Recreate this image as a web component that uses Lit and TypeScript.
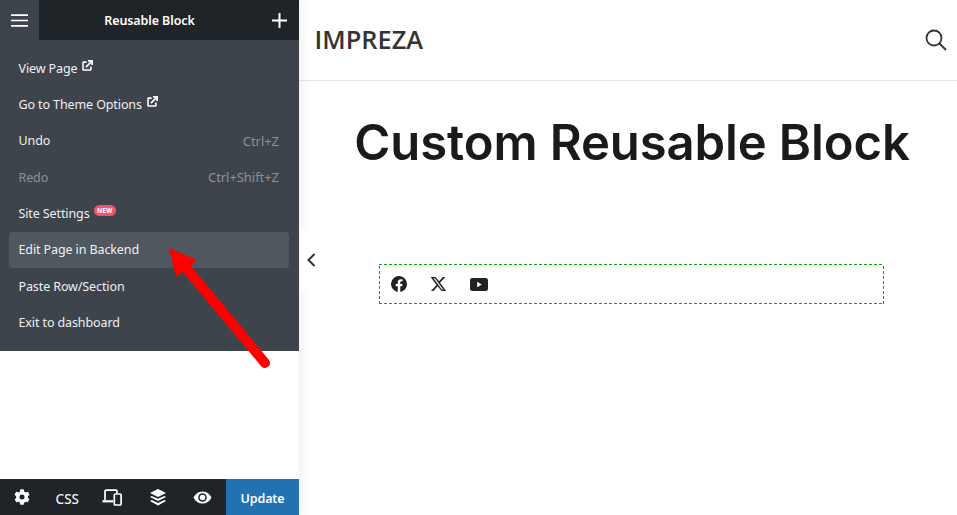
import { LitElement, html, css, svg } from "lit";
import { customElement } from "lit/decorators.js";

const ext = html`<svg class="ext" viewBox="0 0 12 12" width="11" height="11"><path d="M5 2.300H1.700a.6.6 0 0 0-.6.6v7.400a.6.6 0 0 0 .6.6h7.400a.6.6 0 0 0 .6-.6V7" fill="none" stroke="currentColor" stroke-width="1.700"/><path d="M4.300 7.700 10 2M6.500 .9h4.600V5.500" fill="none" stroke="currentColor" stroke-width="1.900"/></svg>`;

const rows: { label: string; extra?: any; sc?: string; dim?: boolean; hi?: boolean }[] = [
  { label: "View Page", extra: ext },
  { label: "Go to Theme Options", extra: ext },
  { label: "Undo", sc: "Ctrl+Z" },
  { label: "Redo", sc: "Ctrl+Shift+Z", dim: true },
  { label: "Site Settings", extra: html`<span class="new">NEW</span>` },
  { label: "Edit Page in Backend", hi: true },
  { label: "Paste Row/Section" },
  { label: "Exit to dashboard" },
];

@customElement("app-root")
export class AppRoot extends LitElement {
  static styles = css`
    :host { display: block; width: 957px; height: 515px; position: relative; overflow: hidden; background: #fff; font-family: "Noto Sans", sans-serif; }
    .page { display: grid; grid-template-columns: 299px 1fr; height: 515px; }
    .side { display: flex; flex-direction: column; background: #fff; box-shadow: 0 0 14px rgba(0,0,0,.09); position: relative; z-index: 1; }
    .top { display: flex; height: 40px; background: #1f2428; color: #fff; align-items: center; }
    .burger { width: 39px; height: 40px; background: #3e444c; display: flex; align-items: center; justify-content: center; }
    .title { flex: 1; text-align: center; font-size: 12.5px; font-weight: 600; letter-spacing: -.1px; padding-right: 39px; }
    .plus { width: 39px; display: flex; justify-content: center; margin-left: -39px; }
    .menu { background: #3e444c; padding: 10px 10px 10px 9px; display: flex; flex-direction: column; }
    .row { height: 36.4px; box-sizing: border-box; padding: 0 10px .4px 9.5px; display: flex; align-items: center; justify-content: space-between; color: #eef0f1; font-size: 12.5px; letter-spacing: -.11px; border-radius: 4px; }
    .row.hi { background: #50575f; }
    .row.dim .lb { color: #8c9196; }
    .lb { display: flex; align-items: center; gap: 5px; }
    .ext { margin-top: -6px; color: #fff; }
    .sc { color: #8c9196; font-size: 13px; letter-spacing: -.05px; }
    .new { background: #f0566b; color: #fff; font-size: 6.5px; font-weight: 700; line-height: 11px; padding: 0 3.5px; border-radius: 5.5px; margin-top: -6px; margin-left: -1px; letter-spacing: 0; }
    .spacer { flex: 1; }
    .foot { height: 36px; background: #1f2428; color: #eef0f1; display: flex; align-items: center; }
    .ft { display: flex; align-items: center; justify-content: center; width: 45.2px; font-size: 13.5px; font-weight: 500; }
    .ft:first-child { margin-left: -1px; }
    .ft.txt { padding-top: 3px; padding-left: 1px; box-sizing: border-box; }
    .ft.layers { padding: 1px 0 0 1px; box-sizing: border-box; }
    .update { margin-left: auto; width: 73px; height: 36px; padding-top: 3px; box-sizing: border-box; background: #2271b1; color: #fff; display: flex; align-items: center; justify-content: center; font-size: 12.5px; font-weight: 600; letter-spacing: -.1px; }
    .main { display: flex; flex-direction: column; align-items: stretch; position: relative; }
    .hdr { height: 78px; border-bottom: 1px solid #e8e8e8; display: flex; align-items: center; justify-content: space-between; padding: 0 10px 2px 15.5px; }
    .logo { font-size: 25.4px; font-weight: 600; color: #333; font-family: "Open Sans", sans-serif; }
    .search { margin-top: 1px; }
    h1 { margin: 34px 0 0 8px; text-align: center; font: 600 49px/56px Inter, sans-serif; color: #1a1a1a; letter-spacing: -.1px; }
    .box {
      margin: 93px 73px 0 80px; height: 40px; box-sizing: border-box; display: flex; align-items: center; gap: 23px; padding-left: 12px;
      background:
        repeating-linear-gradient(90deg, #0a0 0 3px, transparent 3px 5px) top left / 100% 1px no-repeat,
        repeating-linear-gradient(90deg, #0a0 0 3px, transparent 3px 5px) bottom left / 100% 1px no-repeat,
        repeating-linear-gradient(0deg, #0a0 0 3px, transparent 3px 5px) top left / 1px 100% no-repeat,
        repeating-linear-gradient(0deg, #0a0 0 3px, transparent 3px 5px) top right / 1px 100% no-repeat;
    }
    .box svg { display: block; }
    .tab { position: absolute; left: 1px; top: 230px; width: 21px; height: 60px; background: #fff; display: flex; align-items: center; justify-content: center; padding-left: 2px; box-sizing: border-box; z-index: 2; }
    .arrow { position: absolute; left: 0; top: 0; pointer-events: none; z-index: 3; }
  `;

  render() {
    return html`
      <div class="page">
        <aside class="side">
          <div class="top">
            <div class="burger"><svg width="17" height="13" viewBox="0 0 17 13"><path d="M0 1.200h17M0 6.500h17M0 11.800h17" stroke="#fff" stroke-width="1.700"/></svg></div>
            <div class="title">Reusable Block</div>
            <div class="plus"><svg width="15" height="15" viewBox="0 0 15 15"><path d="M7.500 0v15M0 7.500h15" stroke="#fff" stroke-width="2"/></svg></div>
          </div>
          <div class="menu">
            ${rows.map(
              (r) => html`<div class="row ${r.hi ? "hi" : ""} ${r.dim ? "dim" : ""}"><span class="lb">${r.label}${r.extra ?? ""}</span>${r.sc ? html`<span class="sc">${r.sc}</span>` : ""}</div>`
            )}
          </div>
          <div class="spacer"></div>
          <div class="foot">
            <div class="ft"><svg width="16" height="16" viewBox="0 0 512 512" fill="#fff"><path d="M487 316l-42-25c4-23 4-47 0-70l42-25c5-3 7-9 5-14-11-35-30-67-54-93-4-4-10-5-15-2l-42 24c-18-15-38-27-60-35V28c0-6-4-11-9-12-37-8-74-8-110 0-5 1-9 6-9 12v49c-22 8-42 20-60 35L91 88c-5-3-11-2-15 2-24 26-43 58-54 93-2 5 0 11 5 14l42 25c-4 23-4 47 0 70l-42 25c-5 3-7 9-5 14 11 35 30 67 54 93 4 4 10 5 15 2l42-24c18 15 38 27 60 35v49c0 6 4 11 9 12 37 8 74 8 110 0 5-1 9-6 9-12v-49c22-8 42-20 60-35l42 24c5 3 11 2 15-2 24-26 43-58 54-93 2-5 0-11-5-14zM256 336a80 80 0 1 1 0-160 80 80 0 0 1 0 160z"/></svg></div>
            <div class="ft txt">CSS</div>
            <div class="ft"><svg width="20" height="17" viewBox="0 0 20 17" fill="none" stroke="#fff" stroke-width="1.700"><path d="M3 11V2.200a1 1 0 0 1 1-1h10a1 1 0 0 1 1 1V4"/><path d="M.5 12.300H11" stroke-width="2.200"/><rect x="12.300" y="5" width="6.800" height="11" rx="1"/></svg></div>
            <div class="ft layers"><svg width="16" height="17" viewBox="0 0 16 17" fill="#fff"><path d="M8 0l8 4-8 4-8-4z"/><path d="M1.700 7L0 8l8 4 8-4-1.700-1L8 9.800z"/><path d="M1.700 11L0 12l8 4.500 8-4.500-1.700-1L8 14z"/></svg></div>
            <div class="ft"><svg width="19" height="13" viewBox="0 0 18 13"><path d="M0 6.500C2 2.500 5 .5 9 .5s7 2 9 6c-2 4-5 6-9 6s-7-2-9-6z" fill="#fff"/><circle cx="9" cy="6.500" r="4.300" fill="#1f2428"/><circle cx="9" cy="6.500" r="2.800" fill="#fff"/></svg></div>
            <div class="update">Update</div>
          </div>
        </aside>
        <main class="main">
          <header class="hdr">
            <div class="logo">IMPREZA</div>
            <svg class="search" width="22" height="22" viewBox="0 0 22 22" fill="none" stroke="#333" stroke-width="1.800"><circle cx="9" cy="9" r="7.500"/><path d="M14.500 14.500l6 6" stroke-linecap="round"/></svg>
          </header>
          <h1>Custom Reusable Block</h1>
          <div class="box">
            <svg width="16" height="16" viewBox="0 0 16 16" fill="#222"><path d="M16 8a8 8 0 1 0-9.250 7.900v-5.590H4.720V8h2.030V6.240c0-2 1.190-3.110 3.020-3.110.87 0 1.790.16 1.790.16v1.970h-1.010c-.99 0-1.300.62-1.300 1.250V8h2.220l-.35 2.310H9.250V15.900A8 8 0 0 0 16 8z"/></svg>
            <svg width="17" height="16" viewBox="0 0 24 24" fill="#222" preserveAspectRatio="none"><path d="M18.200 1.500h3.400l-7.400 8.500L23 22.500h-6.800l-5.300-7-6.100 7H1.300l7.900-9.100L.9 1.500h7l4.800 6.400zm-1.200 19h1.900L6.900 3.400H4.900z"/></svg>
            <svg width="18" height="13" viewBox="0 0 18 13" fill="#222"><path d="M2.500 0h13A2.500 2.500 0 0 1 18 2.500v8a2.500 2.500 0 0 1-2.500 2.500h-13A2.500 2.500 0 0 1 0 10.500v-8A2.500 2.500 0 0 1 2.500 0z"/><path d="M7.200 3.800v5.400l4.600-2.700z" fill="#fff"/></svg>
          </div>
          <div class="tab"><svg width="9" height="14" viewBox="0 0 9 14" fill="none" stroke="#2c3238" stroke-width="2"><path d="M7.500 1L1.500 7l6 6"/></svg></div>
        </main>
      </div>
      <svg class="arrow" width="957" height="515" viewBox="0 0 957 515">
        ${svg`<path d="M169 248L197 260L176 277Z" fill="#f00"/><path d="M186 268L265 363" stroke="#f00" stroke-width="10" stroke-linecap="round"/>`}
      </svg>
    `;
  }
}
